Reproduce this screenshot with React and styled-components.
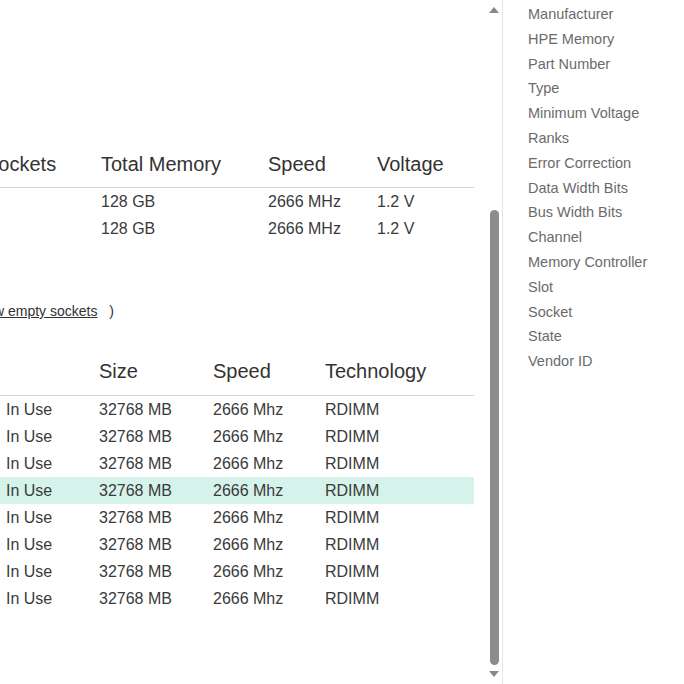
import React from "react";
import styled, { createGlobalStyle } from "styled-components";

const Global = createGlobalStyle`
  html, body { margin: 0; background: #fff; }
  body { font-family: "Liberation Sans", Arial, sans-serif; color: #333; }
`;

const Page = styled.div`
  display: flex;
  width: 684px;
  height: 684px;
  overflow: hidden;
`;

const Main = styled.div`
  width: 486px;
  overflow: hidden;
  padding-top: 142px;
`;

const Inner = styled.div`
  margin-left: -40px;
  width: 514px;
`;

const Grid = styled.div`
  display: grid;
  grid-template-columns: ${(p) => p.cols};
  align-items: center;
`;

const Head = styled(Grid)`
  height: ${(p) => p.$h || 45}px;
  font-size: 20px;
  color: #333;
  border-bottom: 1px solid #d6d6d6;
`;

const Row = styled(Grid)`
  height: 27px;
  font-size: 16px;
  color: #3a3a3a;
  background: ${(p) => (p.$hl ? "#d5f3ea" : "transparent")};
`;

const Cell = styled.div`
  padding-left: ${(p) => p.$pl || 0}px;
  white-space: nowrap;
`;

const Note = styled.div`
  margin: 61px 0 0 40px;
  font-size: 14px;
  color: #333;
  a { color: #333; text-decoration: underline; margin-left: -6px; }
`;

const Table2 = styled.div`
  margin-top: 28px;
`;

const Scroll = styled.div`
  width: 16px;
  border-right: 1px solid #e4e4e4;
  display: flex;
  flex-direction: column;
  align-items: center;
`;

const Arrow = styled.div`
  width: 0;
  height: 0;
  border-left: 5px solid transparent;
  border-right: 5px solid transparent;
  ${(p) => (p.$down ? "border-top: 6px solid #888;" : "border-bottom: 6px solid #888;")}
  margin: ${(p) => (p.$down ? "0" : "7px 0 0")};
`;

const Thumb = styled.div`
  width: 9px;
  height: 455px;
  margin-top: 197px;
  margin-bottom: 6px;
  background: #8c8c8c;
  border-radius: 5px;
`;

const Side = styled.ul`
  list-style: none;
  margin: 0;
  padding: 2px 0 0 25px;
`;

const Item = styled.li`
  font-size: 14.5px;
  color: #6b6b6b;
  line-height: 24.8px;
`;

const c1 = "141px 167px 109px 97px";
const c2 = "139px 114px 112px 149px";

const props = ["Manufacturer", "HPE Memory", "Part Number", "Type", "Minimum Voltage", "Ranks", "Error Correction", "Data Width Bits", "Bus Width Bits", "Channel", "Memory Controller", "Slot", "Socket", "State", "Vendor ID"];

export default function App() {
  return (
    <Page>
      <Global />
      <Main>
        <Inner>
          <Head cols={c1}>
            <Cell $pl={25}>Sockets</Cell>
            <Cell>Total Memory</Cell>
            <Cell>Speed</Cell>
            <Cell>Voltage</Cell>
          </Head>
          {[0, 1].map((i) => (
            <Row key={i} cols={c1}>
              <Cell />
              <Cell>128 GB</Cell>
              <Cell>2666 MHz</Cell>
              <Cell>1.2 V</Cell>
            </Row>
          ))}
          <Note>
            <a>w empty sockets</a>&nbsp;&nbsp;&nbsp;)
          </Note>
          <Table2>
            <Head cols={c2} $h={48}>
              <Cell />
              <Cell>Size</Cell>
              <Cell>Speed</Cell>
              <Cell>Technology</Cell>
            </Head>
            {Array.from({ length: 8 }).map((_, i) => (
              <Row key={i} cols={c2} $hl={i === 3}>
                <Cell $pl={46}>In Use</Cell>
                <Cell>32768 MB</Cell>
                <Cell>2666 Mhz</Cell>
                <Cell>RDIMM</Cell>
              </Row>
            ))}
          </Table2>
        </Inner>
      </Main>
      <Scroll>
        <Arrow />
        <Thumb />
        <Arrow $down />
      </Scroll>
      <Side>
        {props.map((p) => (
          <Item key={p}>{p}</Item>
        ))}
      </Side>
    </Page>
  );
}
